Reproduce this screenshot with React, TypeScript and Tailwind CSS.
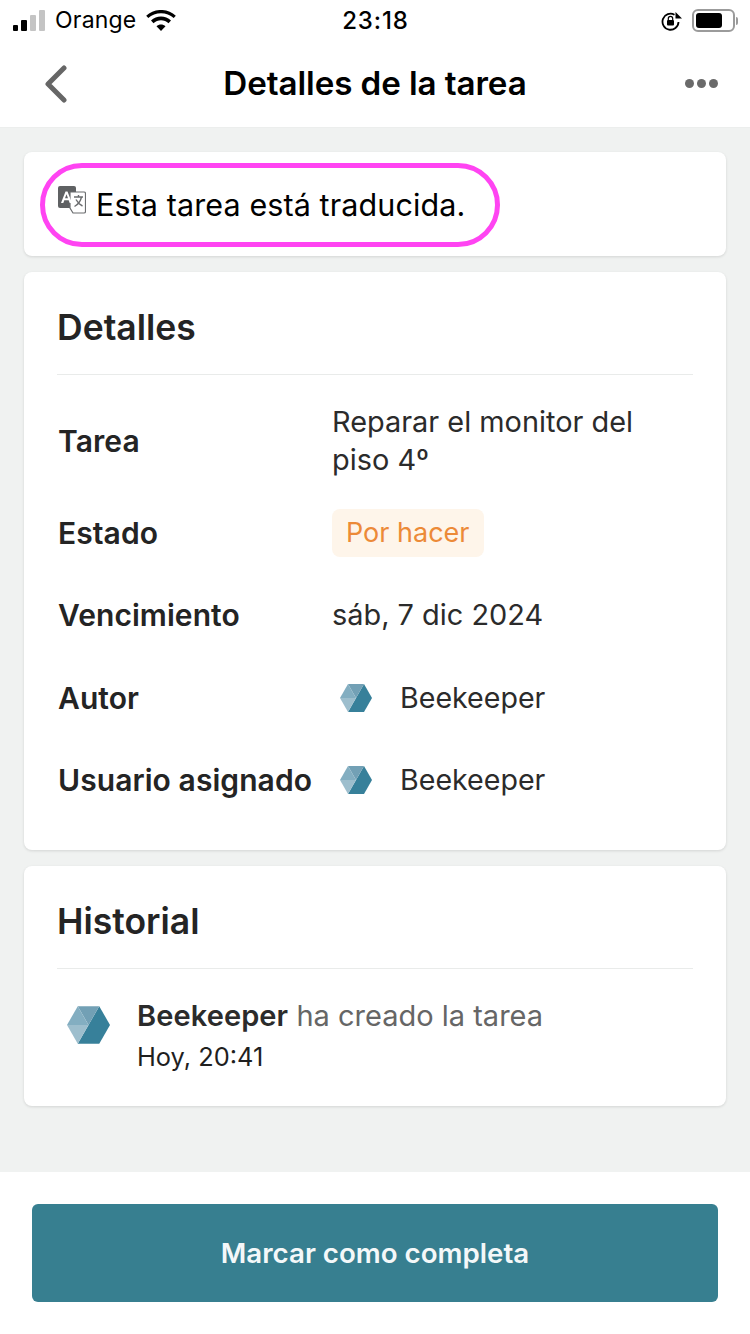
function Hexagon({ className }: { className: string }) {
  return (
    <svg viewBox="0 0 32 28" className={className}>
      <path d="M24 0 32 14 24 28H8L16 14Z" fill="#37809a" />
      <path d="M8 0H24L16 14Z" fill="#72a0b5" />
      <path d="M0 14 8 0 16 14Z" fill="#83aec1" />
      <path d="M0 14H16L8 28Z" fill="#9dbecd" />
    </svg>
  );
}

function TranslateIcon() {
  return (
    <svg viewBox="0 0 28 28" className="mb-[9px] h-[28px] w-[28px] shrink-0">
      <rect x="0" y="0" width="18" height="22" rx="2" fill="#5f6163" />
      <path d="M12 6H26A1.500 1.500 0 0 1 27.500 7.500V25.500A1.500 1.500 0 0 1 26 27H15L12 22Z" fill="#fff" stroke="#6b6d6f" strokeWidth="1.200" />
      <path d="M3 17 7.500 5.500H9.500L14 17H11.700L10.700 14.200H6.300L5.300 17ZM7 12.300H10L8.500 8.300Z" fill="#fff" />
      <path d="M16 11H25M20.500 9V11M23.500 11C22.500 15.500 20 18.500 16.500 20.500M18 13.500C19.500 16.500 21.500 18.500 24.500 20" fill="none" stroke="#6b6d6f" strokeWidth="1.400" />
    </svg>
  );
}

function StatusBar() {
  return (
    <div className="flex h-[40px] items-center justify-between pl-[13px] pr-[12px] pt-[1px] leading-none text-black">
      <div className="flex w-[220px] items-center">
        <div className="flex items-end gap-[3px]">
          <span className="h-[6px] w-[5px] rounded-[1px] bg-black" />
          <span className="h-[11px] w-[6px] rounded-[1px] bg-black" />
          <span className="h-[16px] w-[6px] rounded-[1px] bg-[#c4c4c4]" />
          <span className="h-[21px] w-[6px] rounded-[1px] bg-[#c4c4c4]" />
        </div>
        <span className="ml-[10px] text-[23px] tracking-[0.2px]">Orange</span>
        <svg viewBox="0 0 30 22" className="ml-[10px] h-[22px] w-[30px]">
          <path d="M15 21 10.500 16.300C13 14 17 14 19.500 16.300Z" fill="#000" />
          <path d="M7.500 13.200C11.500 9.300 18.500 9.300 22.500 13.200L25 10.600C19.500 5.200 10.500 5.200 5 10.600Z" fill="#000" />
          <path d="M2.300 8C9 1.500 21 1.500 27.700 8L29.800 5.800C22 -2 8 -2 0.200 5.800Z" fill="#000" />
        </svg>
      </div>
      <span className="text-[24px] font-medium tracking-[0.9px]">23:18</span>
      <div className="flex w-[220px] items-center justify-end gap-[9px]">
        {/* orientation lock: ring with arrow on its right shoulder */}
        <svg viewBox="0 0 22 20" className="h-[20px] w-[22px]">
          <path d="M17.500 11A8 8 0 1 1 13.500 3.800" fill="none" stroke="#000" strokeWidth="1.800" />
          <path d="M14.500 1 21 7.500H14.500Z" fill="#000" />
          <rect x="6" y="9" width="7" height="5.500" rx="1" fill="#000" />
          <path d="M7.300 9V7.500A2.200 2.200 0 0 1 11.700 7.500V9" fill="none" stroke="#000" strokeWidth="1.200" />
        </svg>
        <div className="flex items-center gap-[1px]">
          <div className="flex h-[23px] w-[43px] items-center rounded-[6px] border-2 border-[#9b9b9b] p-[2px]">
            <div className="h-[15px] w-[26px] rounded-[3px] bg-black" />
          </div>
          <span className="h-[8px] w-[2px] rounded-r-full bg-[#9b9b9b]" />
        </div>
      </div>
    </div>
  );
}

function NavBar() {
  return (
    <div className="flex h-[88px] items-center justify-between border-b border-[#eceeed] px-[32px]">
      <div className="w-[80px] pl-[12px]">
        <svg viewBox="0 0 24 38" className="h-[38px] w-[24px]">
          <path d="M20 3 4 19 20 35" fill="none" stroke="#666666" strokeWidth="5" strokeLinecap="round" strokeLinejoin="round" />
        </svg>
      </div>
      <h1 className="text-[33.2px] font-semibold leading-none tracking-[-0.1px] text-black">Detalles de la tarea</h1>
      <div className="flex w-[80px] justify-end gap-[3px]">
        <span className="h-[9px] w-[9px] rounded-full bg-[#6a6a6a]" />
        <span className="h-[9px] w-[9px] rounded-full bg-[#6a6a6a]" />
        <span className="h-[9px] w-[9px] rounded-full bg-[#6a6a6a]" />
      </div>
    </div>
  );
}

function Card({ title, className, children }: { title: string; className: string; children: React.ReactNode }) {
  return (
    <section className={`rounded-[8px] bg-white px-[33px] shadow-[0_1px_3px_rgba(0,0,0,0.12)] ${className}`}>
      <h2 className="flex h-[103px] items-center border-b border-[#e9ebea] pt-[10px] text-[35.5px] font-semibold text-[#242424]">{title}</h2>
      {children}
    </section>
  );
}

function Row({ label, className, children }: { label: string; className: string; children: React.ReactNode }) {
  return (
    <div className={`flex items-center pl-[1px] ${className}`}>
      <span className="w-[274px] shrink-0 text-[30px] font-semibold tracking-[0.07px] text-[#242424]">{label}</span>
      {children}
    </div>
  );
}

function Person() {
  return (
    <div className="flex items-center">
      <Hexagon className="ml-[8px] h-[28px] w-[32px]" />
      <span className="ml-[28px] text-[28.6px] text-[#2b2b2b]">Beekeeper</span>
    </div>
  );
}

export default function App() {
  return (
    <div className="flex h-[1334px] w-[750px] flex-col overflow-hidden bg-[#f0f2f1] font-['Inter',sans-serif]">
      <header className="bg-white">
        <StatusBar />
        <NavBar />
      </header>

      <main className="flex flex-1 flex-col gap-[16px] px-[24px] pt-[24px]">
        <section className="relative flex h-[104px] items-center rounded-[8px] bg-white pl-[34px] shadow-[0_1px_3px_rgba(0,0,0,0.12)]">
          <TranslateIcon />
          <span className="ml-[10px] pt-[2px] text-[30.5px] tracking-[0.1px] text-black">Esta tarea está traducida.</span>
          {/* highlight ring round the notice */}
          <div className="absolute left-[16px] top-[11px] h-[84px] w-[460px] rounded-[42px] border-[5px] border-[#ff44f2]" />
        </section>

        <Card title="Detalles" className="h-[578px]">
          <div className="flex flex-col pt-[27px]">
            <Row label="Tarea" className="h-[78px]">
              <p className="text-[28.9px] leading-[38px] text-[#2b2b2b]">Reparar el monitor del<br />piso 4º</p>
            </Row>
            <Row label="Estado" className="mt-[29px] h-[48px]">
              <span className="rounded-[8px] bg-[#fef5ea] px-[14px] py-[6px] text-[27px] leading-[36px] text-[#ec8a38]">Por hacer</span>
            </Row>
            <Row label="Vencimiento" className="mt-[34px] h-[48px]">
              <span className="text-[28.9px] text-[#2b2b2b]">sáb, 7 dic 2024</span>
            </Row>
            <Row label="Autor" className="mt-[35px] h-[48px]">
              <Person />
            </Row>
            <Row label="Usuario asignado" className="mt-[34px] h-[48px]">
              <Person />
            </Row>
          </div>
        </Card>

        <Card title="Historial" className="h-[240px]">
          <div className="flex pt-[26px]">
            <Hexagon className="ml-[10px] mt-[11px] h-[38px] w-[43px] shrink-0" />
            <div className="ml-[27px]">
              <p className="text-[29px] leading-[42px] text-[#666666]">
                <span className="font-semibold tracking-[0.1px] text-[#2b2b2b]">Beekeeper</span> ha creado la tarea
              </p>
              <p className="text-[25.4px] leading-[40px] text-[#1f1f1f]">Hoy, 20:41</p>
            </div>
          </div>
        </Card>
      </main>

      <footer className="flex h-[162px] items-start bg-white px-[32px] pt-[32px]">
        <button className="flex h-[98px] w-full items-center justify-center rounded-[6px] bg-[#377f90] pt-[1px] text-[27.7px] font-semibold text-[#f4f8f9]">
          Marcar como completa
        </button>
      </footer>
    </div>
  );
}
